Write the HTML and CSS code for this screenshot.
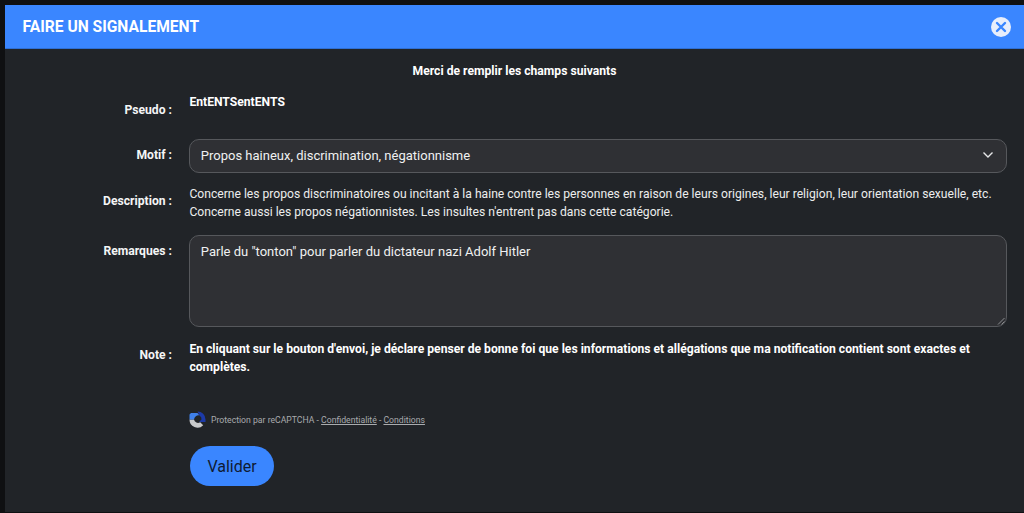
FILE: index.html
```html
<!DOCTYPE html>
<html lang="fr">
<head>
<meta charset="utf-8">
<title>Faire un signalement</title>
<link rel="stylesheet" href="styles.css">
</head>
<body>
<div class="modal">
  <header class="modal-head">
    <h1 class="modal-title">FAIRE UN SIGNALEMENT</h1>
    <span class="close">
      <svg width="20" height="20" viewBox="0 0 20 20"><circle cx="10" cy="10" r="10" fill="#e8eefb"/><path d="M6 6l8 8M14 6l-8 8" stroke="#3a86ff" stroke-width="2.4" stroke-linecap="round"/></svg>
    </span>
  </header>
  <div class="modal-body">
    <p class="intro">Merci de remplir les champs suivants</p>
    <div class="row row-pseudo">
      <div class="label label-pseudo">Pseudo :</div>
      <div class="value strong">EntENTSentENTS</div>
    </div>
    <div class="row row-motif">
      <div class="label label-motif">Motif :</div>
      <div class="select">
        <span>Propos haineux, discrimination, négationnisme</span>
        <svg width="12" height="8" viewBox="0 0 12 8"><path d="M1.5 1.5L6 6l4.5-4.5" fill="none" stroke="#e6e7e8" stroke-width="1.4"/></svg>
      </div>
    </div>
    <div class="row row-desc">
      <div class="label label-desc">Description :</div>
      <div class="value desc">Concerne les propos discriminatoires ou incitant à la haine contre les personnes en raison de leurs origines, leur religion, leur orientation sexuelle, etc.<br>Concerne aussi les propos négationnistes. Les insultes n'entrent pas dans cette catégorie.</div>
    </div>
    <div class="row row-rem">
      <div class="label label-rem">Remarques :</div>
      <div class="textarea">Parle du "tonton" pour parler du dictateur nazi Adolf Hitler
        <svg class="grip" width="8" height="8" viewBox="0 0 8 8"><path d="M7.5 1L1 7.5M7.5 4.5L4.5 7.5" stroke="#8b8c8f" stroke-width="1"/></svg>
      </div>
    </div>
    <div class="row row-note">
      <div class="label label-note">Note :</div>
      <div class="value strong note">En cliquant sur le bouton d'envoi, je déclare penser de bonne foi que les informations et allégations que ma notification contient sont exactes et complètes.</div>
    </div>
    <div class="row row-captcha">
      <div class="label"></div>
      <div class="captcha">
        <svg width="17" height="17" viewBox="0 0 17 17">
          <path d="M0.5 8.5A8 8 0 0 0 14.2 14.2L11.2 11.2A4 4 0 0 1 5 8.5Z" fill="#c9cacc"/>
          <path d="M2 2H8.5L10.5 4.5A4.5 4.5 0 0 0 5 8.5H0.5V3.5Z" fill="#3f80ea"/>
          <path d="M8.5 0.5A8 8 0 0 1 16.5 8.5V11H10L12.5 8.5A4 4 0 0 0 10.5 4.5Z" fill="#1c3aa9"/>
        </svg>
        <span>Protection par reCAPTCHA - <a class="link">Confidentialité</a> - <a class="link">Conditions</a></span>
      </div>
    </div>
    <div class="row row-btn">
      <div class="label"></div>
      <button class="btn" type="button">Valider</button>
    </div>
  </div>
</div>
</body>
</html>
```
FILE: styles.css
```css
* { box-sizing: border-box; }
html, body { margin: 0; height: 100%; }
body {
  background: #0f1012;
  font-family: Roboto, "Liberation Sans", sans-serif;
  color: #f2f3f4;
  overflow: hidden;
  padding: 5px 0 0 5px;
}
.modal { background: #212428; height: 507px; }
.modal-head {
  height: 44px;
  background: #3a86ff;
  border-bottom: 1px solid #2f6fd4;
  display: flex;
  align-items: center;
  justify-content: space-between;
  padding: 0 13px 0 17.6px;
}
.modal-title { margin: 0; font-size: 15.6px; font-weight: 700; color: #fff; }
.close { display: flex; }
.modal-body { padding-top: 14px; font-size: 13px; }
.intro { margin: 0; text-align: center; font-size: 12.15px; font-weight: 700; line-height: 16px; color: #fff; }
.row { display: flex; gap: 17.4px; }
.label { width: 167px; flex: none; text-align: right; font-size: 12.15px; font-weight: 700; line-height: 16px; color: #f4f5f6; }
.value { line-height: 18px; font-size: 12.15px; }
.strong { font-weight: 700; color: #fff; }
.row-pseudo { margin-top: 15px; }
.row-pseudo .value { line-height: 16px; }
.label-pseudo { padding-top: 8px; }
.row-motif { margin-top: 21px; }
.label-motif { padding-top: 8px; }
.select {
  width: 817.6px;
  height: 34px;
  background: #2f3034;
  border: 1px solid #56585c;
  border-radius: 10px;
  display: flex;
  align-items: center;
  justify-content: space-between;
  padding: 0 12px 2px 10.4px;
  font-size: 13px;
  color: #eff0f1;
}
.row-desc { margin-top: 12px; }
.label-desc { padding-top: 8px; }
.desc { color: #eceded; font-size: 12.13px; }
.row-rem { margin-top: 14px; }
.label-rem { padding-top: 8px; }
.textarea {
  position: relative;
  width: 817.6px;
  height: 92px;
  background: #2f3034;
  border: 1px solid #56585c;
  border-radius: 10px;
  padding: 8px 10.4px;
  font-size: 13px;
  line-height: 16px;
  color: #eff0f1;
}
.grip { position: absolute; right: 1px; bottom: 1px; }
.row-note { margin-top: 13px; }
.label-note { padding-top: 7px; }
.note { width: 810px; }
.row-captcha { margin-top: 35px; }
.captcha { display: flex; align-items: center; gap: 4.6px; font-size: 8.66px; color: #a9abae; height: 17px; }
.link { text-decoration: underline; }
.row-btn { margin-top: 18px; gap: 18px; }
.btn {
  width: 84px;
  height: 40px;
  border: 0;
  border-radius: 20px;
  background: #3a86ff;
  color: #0f1b33;
  font-family: inherit;
  font-size: 16px;
}
```
